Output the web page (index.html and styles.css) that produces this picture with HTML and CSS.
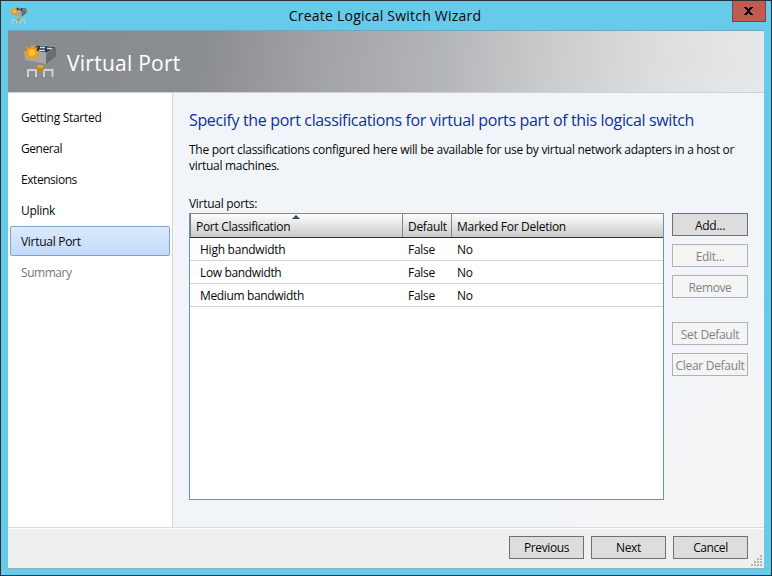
FILE: index.html
```html
<!DOCTYPE html>
<html lang="en">
<head>
<meta charset="utf-8">
<title>Create Logical Switch Wizard</title>
<link rel="stylesheet" href="styles.css">
</head>
<body>
<svg width="0" height="0" class="defs" aria-hidden="true">
  <symbol id="switch" viewBox="0 0 34 34">
    <path d="M13 1L33 2.500L23 10L2 8Z" fill="#b0b2b4"/>
    <path d="M13.500 1.500L32 3L24 8.500L9 7Z" fill="#27384b"/>
    <path d="M17 3.500h5M24 4.500h5M16 6.500h6" stroke="#d5dbe0" stroke-width="1.300"/>
    <path d="M1 8L23 10V20L2 16Z" fill="#a6a7a9"/>
    <path d="M23 10L33 2.500V12L23 20Z" fill="#6a6c6e"/>
    <path d="M5 33V26H13V33M21 33V26H29.500V33" fill="none" stroke="#cfd0d1" stroke-width="2"/>
    <path d="M13 25.500H21" stroke="#b5b6b7"/>
    <path d="M14 21.500h6.500v6H14z" fill="#c8890a"/>
    <path d="M14.500 21.500h5.500v2h-5.500z" fill="#e9b53a"/>
    <path d="M9 0L10.800 4.500L14.600 2.500L13.500 6.500L18 8.200L14 10.100L15.300 14.500L11.200 12.700L9 17L7 12.700L2.800 14.500L4.200 10.100L0 8.500L4.200 6.500L3 2.500L7.200 4.500Z" fill="#f79c18"/>
    <circle cx="9" cy="8.500" r="3.200" fill="#ffc445"/>
  </symbol>
</svg>
<div class="window">
  <header class="titlebar">
    <svg class="app-icon"><use href="#switch"/></svg>
    <span class="caption">Create Logical Switch Wizard</span>
    <button class="close" aria-label="Close"><svg width="9" height="8" viewBox="0 0 9 8"><path d="M0 0h3v1h1v1h1V1h1V0h3v1H8v1H7v1H6v2h1v1h1v1h1v1H6V7H5V6H4v1H3v1H0V7h1V6h1V5h1V3H2V2H1V1H0z"/></svg></button>
  </header>
  <div class="client">
    <div class="banner">
      <svg class="banner-icon"><use href="#switch"/></svg>
      <h1>Virtual Port</h1>
    </div>
    <div class="body">
      <nav>
        <a class="n1">Getting Started</a>
        <a class="n2">General</a>
        <a class="n3">Extensions</a>
        <a class="n4">Uplink</a>
        <a class="n5 current">Virtual Port</a>
        <a class="n6 pending">Summary</a>
      </nav>
      <main>
        <h2>Specify the port classifications for virtual ports part of this logical switch</h2>
        <p><span class="l1">The port classifications configured here will be available for use by virtual network adapters in a host or</span><br><span class="l2">virtual machines.</span></p>
        <div class="label">Virtual ports:</div>
        <div class="ports">
          <div class="grid">
            <div class="row head">
              <span>Port Classification<b class="sort"></b></span><span>Default</span><span>Marked For Deletion</span>
            </div>
            <div class="row"><span class="c1">High bandwidth</span><span>False</span><span>No</span></div>
            <div class="row"><span class="c2">Low bandwidth</span><span>False</span><span>No</span></div>
            <div class="row"><span class="c3">Medium bandwidth</span><span>False</span><span>No</span></div>
          </div>
          <div class="actions">
            <button class="btn b1">Add...</button>
            <button class="btn b2" disabled>Edit...</button>
            <button class="btn b3" disabled>Remove</button>
            <button class="btn b4 gap" disabled>Set Default</button>
            <button class="btn b5" disabled>Clear Default</button>
          </div>
        </div>
      </main>
    </div>
    <footer>
      <button class="btn f1">Previous</button>
      <button class="btn f2">Next</button>
      <button class="btn f3">Cancel</button>
      <svg class="grip" width="11" height="11" viewBox="0 0 11 11"><path d="M9 0h2v2H9zM6 3h2v2H6zM9 3h2v2H9zM3 6h2v2H3zM6 6h2v2H6zM9 6h2v2H9zM0 9h2v2H0zM3 9h2v2H3zM6 9h2v2H6zM9 9h2v2H9z" fill="#b5b5b5"/></svg>
    </footer>
  </div>
</div>
</body>
</html>
```

FILE: styles.css
```css
* { box-sizing: border-box; }
body { margin: 0; font: 12px/16px "Open Sans", "Noto Sans", sans-serif; letter-spacing: -.29px; color: #080808; }
.defs { position: absolute; }
.window { width: 772px; height: 576px; border: 1px solid #2e3033; background: #66caea; padding: 0 7px 6px; display: flex; flex-direction: column; }
.titlebar { height: 29px; flex: none; display: flex; justify-content: space-between; }
.app-icon { width: 17px; height: 17px; margin: 6px 0 0 2px; }
.caption { margin: 5px 0 0 11px; font-size: 14px; line-height: 20px; letter-spacing: .22px; white-space: nowrap; }
.close { width: 34px; height: 21px; margin-right: -2px; padding: 0; border: 1px solid #754746; border-top: 0; background: #c15a50; display: flex; align-items: center; justify-content: center; }
.client { flex: 1; display: flex; flex-direction: column; min-height: 0; border-top: 1px solid #75a5bb; border-bottom: 1px solid #88b3c4; }
.banner { height: 62px; flex: none; border-bottom: 1px solid #d0d0d0; background: linear-gradient(97deg, #888b8f 0%, #8a8d90 25%, #a2a4a8 42%, #b4b7b9 58%, #cbccce 72%, #dddee0 86%, #e7e8e9 100%); display: flex; }
.banner-icon { width: 34px; height: 34px; margin: 13px 0 0 15px; }
h1 { margin: 16px 0 0 10px; font-size: 21px; line-height: 32px; letter-spacing: .25px; font-weight: 400; color: #fff; white-space: nowrap; }
.body { flex: 1; display: flex; min-height: 0; }
nav { width: 165px; flex: none; background: #fff; border-right: 1px solid #d4d6d8; padding: 9px 2px 0; display: flex; flex-direction: column; gap: 1px; }
nav a { height: 30px; line-height: 30px; padding-left: 10px; border: 1px solid transparent; border-radius: 2px; white-space: nowrap; }
.n2, .n3, .n6 { letter-spacing: -.45px; }
nav .current { border-color: #7da2ce; background: linear-gradient(#dceafc, #c1dafb); }
.pending { color: #777; }
main { flex: 1; min-width: 0; padding: 16px 16px 0; background: linear-gradient(135deg, #f1f5f9 75%, #f5f5f5 88%); display: flex; flex-direction: column; }
h2 { margin: 0; font-size: 16px; line-height: 22px; letter-spacing: -.35px; font-weight: 400; color: #10309c; white-space: nowrap; }
p { margin: 11px 0 0; white-space: nowrap; }
.l2 { letter-spacing: -.3px; }
.label { margin-top: 22px; line-height: 16px; height: 17px; }
.ports { display: flex; gap: 8px; }
.grid { width: 475px; height: 287px; background: #fff; border: 1px solid #6a8fb8; }
.row { display: grid; grid-template-columns: 213px 49px 1fr; height: 23px; border-bottom: 1px solid #d2d2d2; line-height: 24px; white-space: nowrap; }
.row span { height: 22px; padding-left: 5px; }
.row span:first-child { padding-left: 10px; }
.row .c1 { letter-spacing: -.25px; }
.row .c2, .row .c3 { letter-spacing: -.35px; }
.head { height: 24px; background: linear-gradient(#fdfdfd, #cacaca); border-bottom-color: #333; }
.head span { height: 23px; line-height: 26px; border-right: 1px solid #858585; position: relative; }
.head span:first-child { border-left: 1px solid #777; padding-left: 5px; }
.head span:last-child { border-right: 0; }
.sort { position: absolute; left: 101px; top: 1px; border: solid transparent; border-width: 0 4px 4px; border-bottom-color: #2f4f4f; }
.actions { width: 76px; display: flex; flex-direction: column; gap: 8px; }
.btn { height: 23px; padding: 2px 0 0; border: 1px solid #707070; background: #ddd; font: inherit; letter-spacing: inherit; color: #080808; line-height: 20px; white-space: nowrap; }
.btn:disabled { border-color: #adb2b5; background: #f4f4f4; color: #838383; }
.b3, .f1, .f3 { letter-spacing: -.4px; }
.actions .gap { margin-top: 16px; }
footer { height: 41px; flex: none; border-top: 1px solid #d9dadc; box-shadow: inset 0 1px #fff; background: #efefef; padding: 8px 16px 0 0; display: flex; justify-content: flex-end; gap: 7px; position: relative; }
footer .btn { width: 75px; padding-top: 0; }
.grip { position: absolute; right: 2px; bottom: 2px; }
```
